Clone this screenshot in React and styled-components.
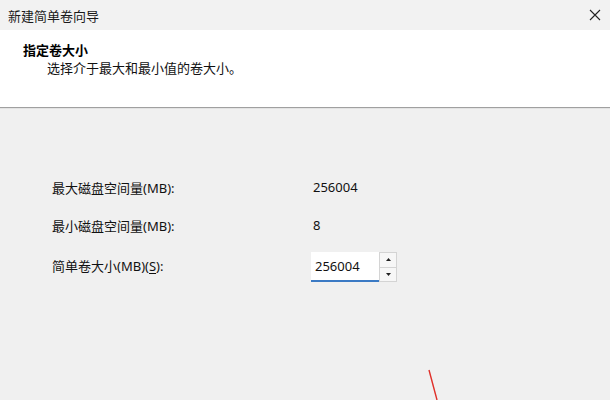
import React from "react";
import styled, { createGlobalStyle } from "styled-components";

const Global = createGlobalStyle`
  html, body { margin: 0; padding: 0; }
  body {
    width: 610px; height: 400px; overflow: hidden;
    font-family: "Segoe UI", "Noto Sans", "Noto Sans CJK SC", sans-serif;
    font-size: 13px; color: #000; background: #f0f0f0;
  }
`;

const Window = styled.div`
  position: relative;
  width: 610px; height: 400px;
  display: flex; flex-direction: column;
  background: #f0f0f0;
  overflow: hidden;
`;

const TitleBar = styled.div`
  height: 30px; flex: none;
  display: flex; align-items: center; justify-content: space-between;
  background: #f2f2f2;
  padding-left: 8px;
`;

const TitleText = styled.span`
  font-size: 13px; color: #1a1a1a;
  font-family: "Noto Sans CJK SC", sans-serif;
`;

const CloseButton = styled.div`
  width: 46px; height: 30px;
  display: flex; align-items: center; justify-content: center;
  margin-right: -8px;
`;

const Header = styled.div`
  height: 78px; flex: none;
  background: #fff;
  border-bottom: 1px solid #a0a0a0;
  box-shadow: 0 1px 0 #e3e3e3;
  padding: 10px 0 0 23px;
  box-sizing: border-box;
  display: flex; flex-direction: column;
  font-family: "Noto Sans CJK SC", sans-serif;
`;

const HeaderTitle = styled.div`
  font-weight: 700; font-size: 13px; line-height: 19px;
`;

const HeaderSub = styled.div`
  padding-left: 24px; font-size: 13px; line-height: 18px; color: #111;
`;

const Body = styled.div`
  flex: 1;
  padding: 60px 0 0 52px;
  display: grid;
  grid-template-columns: 259px auto;
  grid-template-rows: 38px 38px 42px;
  align-content: start;
  align-items: center;
`;

const Label = styled.div`
  font-family: "Segoe UI", "Noto Sans", "Noto Sans CJK SC", sans-serif;
  font-size: 13px; color: #111;
  & u { text-decoration-thickness: 1px; text-underline-offset: 2px; }
`;

const Value = styled.div`
  padding-left: 2px;
  font-size: 13px; color: #111;
  font-family: "Noto Sans", sans-serif;
`;

const Spin = styled.div`
  display: flex; align-items: stretch; height: 30px;
  align-self: start; margin-top: 8px;
`;

const Input = styled.div`
  width: 68px; box-sizing: border-box;
  background: #fff;
  border-bottom: 2px solid #3b7ac4;
  padding: 0 0 0 4px;
  display: flex; align-items: center;
  font-family: "Noto Sans", sans-serif;
  font-size: 13px; color: #111;
`;

const Arrows = styled.div`
  width: 18px; display: flex; flex-direction: column;
  border: 1px solid #d4d4d4; box-sizing: border-box;
  background: #f7f7f7;
`;

const ArrowBtn = styled.div`
  flex: 1; display: flex; align-items: center; justify-content: center;
  & + & { border-top: 1px solid #d4d4d4; }
`;

const Annotation = styled.svg`
  position: absolute; left: 420px; top: 360px;
`;

export default function App() {
  return (
    <Window>
      <Global />
      <TitleBar>
        <TitleText>新建简单卷向导</TitleText>
        <CloseButton>
          <svg width="12" height="12" viewBox="0 0 12 12">
            <path d="M1 1 L11 11 M11 1 L1 11" stroke="#222" strokeWidth="1.1" />
          </svg>
        </CloseButton>
      </TitleBar>
      <Header>
        <HeaderTitle>指定卷大小</HeaderTitle>
        <HeaderSub>选择介于最大和最小值的卷大小。</HeaderSub>
      </Header>
      <Body>
        <Label>最大磁盘空间量(MB):</Label>
        <Value>256004</Value>
        <Label>最小磁盘空间量(MB):</Label>
        <Value>8</Value>
        <Label>简单卷大小(MB)(<u>S</u>):</Label>
        <Spin>
          <Input>256004</Input>
          <Arrows>
            <ArrowBtn>
              <svg width="5" height="3" viewBox="0 0 5 3"><path d="M0 3 L2.5 0 L5 3Z" fill="#222" /></svg>
            </ArrowBtn>
            <ArrowBtn>
              <svg width="5" height="3" viewBox="0 0 5 3"><path d="M0 0 L2.5 3 L5 0Z" fill="#222" /></svg>
            </ArrowBtn>
          </Arrows>
        </Spin>
      </Body>
      <Annotation width="30" height="40" viewBox="0 0 30 40">
        <path d="M9 10 L17 40" stroke="#e0302a" strokeWidth="1.4" fill="none" />
      </Annotation>
    </Window>
  );
}
